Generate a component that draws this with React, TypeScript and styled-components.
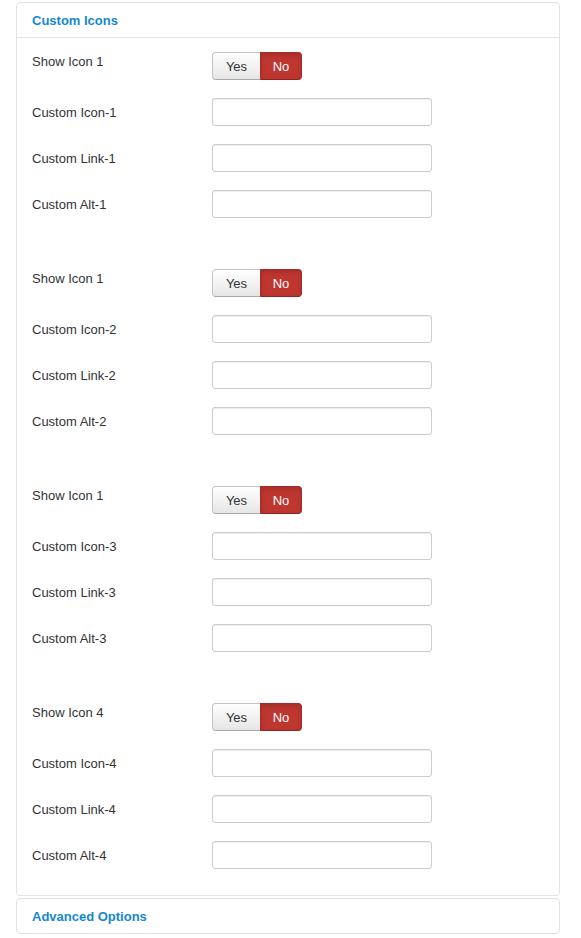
import * as React from "react";
import styled, { createGlobalStyle } from "styled-components";

const GlobalStyle = createGlobalStyle`
  body {
    margin: 0;
    background: #ffffff;
    font-family: "Liberation Sans", Arial, Helvetica, sans-serif;
    font-size: 13px;
    line-height: 18px;
    color: #333333;
  }
`;

const Page = styled.div`
  width: 544px;
  padding: 2px 0 0 16px;
`;

const Panel = styled.div`
  border: 1px solid #e3e3e3;
  border-radius: 4px;
  margin-bottom: 2px;
  background: #ffffff;
`;

const PanelHeading = styled.div<{ $open?: boolean }>`
  padding: 9px 15px 7px;
  border-bottom: ${(p) => (p.$open ? "1px solid #e5e5e5" : "none")};
`;

const PanelTitle = styled.span`
  font-weight: bold;
  font-size: 13px;
  color: #1587d0;
`;

const PanelBody = styled.div`
  padding: 14px 15px 8px;
`;

// group margin collapses with the last row's 18px, so 51 gives 18 + 33
const FieldGroup = styled.div`
  margin-bottom: 51px;
  &:last-child {
    margin-bottom: 0;
  }
`;

const ControlGroup = styled.div`
  display: flex;
  align-items: flex-start;
  margin-bottom: 18px;
`;

const Label = styled.label<{ $offset: number }>`
  width: 180px;
  flex-shrink: 0;
  padding-top: ${(p) => p.$offset}px;
  color: #333333;
`;

const TextInput = styled.input`
  box-sizing: border-box;
  width: 220px;
  height: 28px;
  padding: 4px 6px;
  border: 1px solid #cccccc;
  border-radius: 3px;
  font: inherit;
  background: #ffffff;
  box-shadow: inset 0 1px 1px rgba(0, 0, 0, 0.075);
`;

const Toggle = styled.div`
  display: flex;
  height: 28px;
`;

const ToggleButton = styled.span<{ $active?: boolean; $side: "left" | "right"; $width: number }>`
  box-sizing: border-box;
  width: ${(p) => p.$width}px;
  height: 28px;
  padding: 5px 0 3px;
  line-height: 18px;
  font-size: 13px;
  border: 1px solid ${(p) => (p.$active ? "#a72c27" : "#c4c4c4")};
  border-bottom-color: ${(p) => (p.$active ? "#8f2420" : "#a9a9a9")};
  border-radius: ${(p) => (p.$side === "left" ? "4px 0 0 4px" : "0 4px 4px 0")};
  margin-left: ${(p) => (p.$side === "right" ? "-1px" : "0")};
  color: ${(p) => (p.$active ? "#ffffff" : "#333333")};
  background: ${(p) =>
    p.$active
      ? "#bd362f"
      : "linear-gradient(to bottom, #ffffff, #e6e6e6)"};
  box-shadow: ${(p) =>
    p.$active ? "inset 0 2px 4px rgba(0,0,0,0.15)" : "inset 0 1px 0 rgba(255,255,255,0.2)"};
  text-align: center;
`;

const groups = [
  { show: "Show Icon 1", n: 1 },
  { show: "Show Icon 1", n: 2 },
  { show: "Show Icon 1", n: 3 },
  { show: "Show Icon 4", n: 4 },
];

export default function App() {
  return (
    <>
      <GlobalStyle />
      <Page>
        <Panel>
          <PanelHeading $open>
            <PanelTitle>Custom Icons</PanelTitle>
          </PanelHeading>
          <PanelBody>
            {groups.map((g) => (
              <FieldGroup key={g.n}>
                <ControlGroup>
                  <Label $offset={1}>{g.show}</Label>
                  <Toggle>
                    <ToggleButton $side="left" $width={49}>
                      Yes
                    </ToggleButton>
                    <ToggleButton $side="right" $width={42} $active>
                      No
                    </ToggleButton>
                  </Toggle>
                </ControlGroup>
                {["Custom Icon", "Custom Link", "Custom Alt"].map((name) => (
                  <ControlGroup key={name}>
                    <Label $offset={6}>{`${name}-${g.n}`}</Label>
                    <TextInput type="text" />
                  </ControlGroup>
                ))}
              </FieldGroup>
            ))}
          </PanelBody>
        </Panel>
        <Panel>
          <PanelHeading>
            <PanelTitle>Advanced Options</PanelTitle>
          </PanelHeading>
        </Panel>
      </Page>
    </>
  );
}
